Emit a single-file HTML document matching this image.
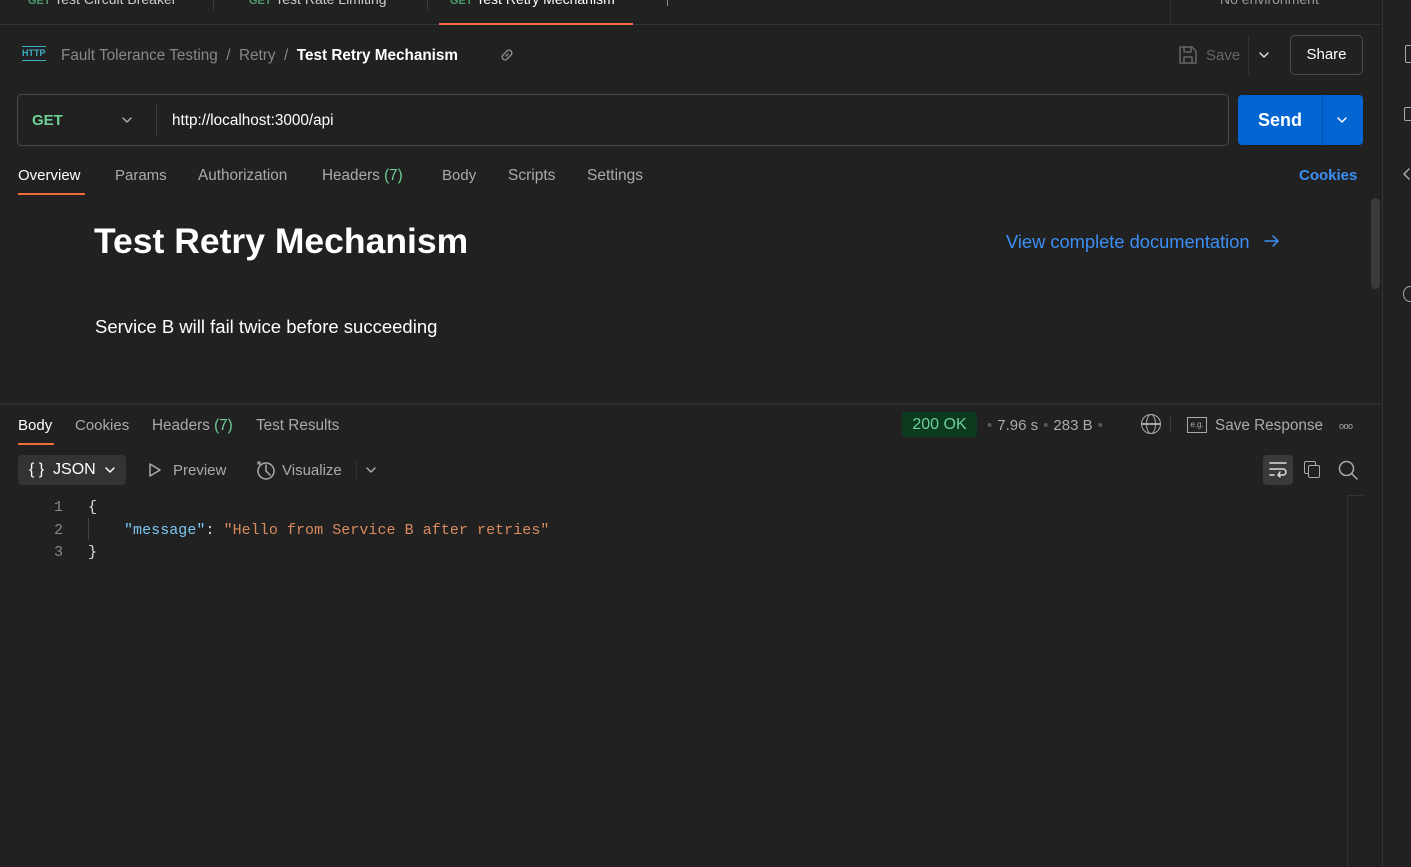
<!DOCTYPE html><html><head><style>
*{box-sizing:border-box;margin:0;padding:0}
body{width:1411px;height:867px;background:#212121;font-family:"Liberation Sans",sans-serif;color:#ccc;position:relative;overflow:hidden;font-size:15px}
.a{position:absolute;white-space:nowrap}
.g{color:#5a5a5a;margin:0 5px}
.mono{font-family:"Liberation Mono",monospace;font-size:15px}
svg.c{position:absolute;fill:none;stroke-width:1.5;stroke-linecap:round;stroke-linejoin:round}
</style></head><body>
<!-- top tabs -->
<div class="a" style="left:0;top:24px;width:1382px;height:1px;background:#333"></div>
<div class="a" style="left:28px;top:-9px;font-size:14px"><span style="color:#4c9a6a;font-size:11px;font-weight:bold">GET</span> Test Circuit Breaker</div>
<div class="a" style="left:213px;top:0;width:1px;height:10px;background:#3a3a3a"></div>
<div class="a" style="left:249px;top:-9px;font-size:14px"><span style="color:#4c9a6a;font-size:11px;font-weight:bold">GET</span> Test Rate Limiting</div>
<div class="a" style="left:427px;top:0;width:1px;height:10px;background:#3a3a3a"></div>
<div class="a" style="left:450px;top:-9px;font-size:14px;color:#fff"><span style="color:#4c9a6a;font-size:11px;font-weight:bold">GET</span> Test Retry Mechanism</div>
<div class="a" style="left:439px;top:23px;width:194px;height:2px;background:#f26b3a"></div>
<div class="a" style="left:667px;top:0;width:1px;height:6px;background:#888"></div>
<div class="a" style="left:1170px;top:0;width:1px;height:24px;background:#333"></div>
<div class="a" style="left:1220px;top:-9px;font-size:14px;color:#999">No environment</div>
<div class="a" style="left:1382px;top:0;width:1px;height:867px;background:#333"></div>
<!-- breadcrumb -->
<div class="a" style="left:22px;top:46px;color:#3fb0c8;font-size:9px;font-weight:bold;border-top:1px solid #3fb0c8;border-bottom:1px solid #3fb0c8;line-height:11px;padding:1px 0">HTTP</div>
<div class="a" style="left:61px;top:47px;color:#888;font-size:15.3px">Fault Tolerance Testing &nbsp;/&nbsp; Retry &nbsp;/&nbsp; <span style="color:#fff;font-weight:bold">Test Retry Mechanism</span></div>
<svg class="c" style="left:499px;top:47px;stroke:#888" width="16" height="16"><path d="M7 9 L9 7 M6 6 L8 4 a2.8 2.8 0 0 1 4 4 L10 10 M10 10 M6 6 L4 8 a2.8 2.8 0 0 0 4 4 L10 10"/></svg>
<svg class="c" style="left:1178px;top:45px;stroke:#666" width="20" height="20"><path d="M2 2 H14 L18 6 V18 H2 Z M6 2 V7 H13 V2 M6 18 V12 H14 V18"/></svg>
<div class="a" style="left:1206px;top:47px;color:#666">Save</div>
<div class="a" style="left:1248px;top:35px;width:1px;height:40px;background:#333"></div>
<svg class="c" style="left:1258px;top:50px;stroke:#ddd" width="12" height="10"><path d="M2 3 L6 7 L10 3"/></svg>
<div class="a" style="left:1290px;top:35px;width:73px;height:40px;border:1px solid #4a4a4a;border-radius:5px;color:#fff;text-align:center;line-height:38px">Share</div>
<!-- url bar -->
<div class="a" style="left:17px;top:94px;width:1212px;height:52px;border:1px solid #4a4a4a;border-radius:5px"></div>
<div class="a" style="left:32px;top:112px;color:#6fcf97;font-weight:bold;font-size:15px">GET</div>
<svg class="c" style="left:121px;top:115px;stroke:#aaa" width="12" height="10"><path d="M2 3 L6 7 L10 3"/></svg>
<div class="a" style="left:156px;top:104px;width:1px;height:32px;background:#3a3a3a"></div>
<div class="a" style="left:172px;top:112px;color:#fff;font-size:15.3px">http://localhost:3000/api</div>
<div class="a" style="left:1238px;top:95px;width:125px;height:50px;background:#0265d2;border-radius:4px"></div>
<div class="a" style="left:1322px;top:95px;width:1px;height:50px;background:#0252ad"></div>
<div class="a" style="left:1258px;top:110px;color:#fff;font-weight:bold;font-size:18px">Send</div>
<svg class="c" style="left:1336px;top:115px;stroke:#fff" width="12" height="10"><path d="M2 3 L6 7 L10 3"/></svg>
<!-- req tabs -->
<div class="a" style="left:18px;top:167px;color:#fff">Overview</div>
<div class="a" style="left:18px;top:193px;width:67px;height:2px;background:#f26b3a"></div>
<div class="a" style="left:115px;top:167px;color:#aaa">Params</div>
<div class="a" style="left:198px;top:167px;color:#aaa;font-size:15.3px">Authorization</div>
<div class="a" style="left:322px;top:167px;color:#aaa;font-size:15.3px">Headers <span style="color:#6fcf97">(7)</span></div>
<div class="a" style="left:442px;top:167px;color:#aaa">Body</div>
<div class="a" style="left:508px;top:167px;color:#aaa;font-size:15.5px">Scripts</div>
<div class="a" style="left:587px;top:167px;color:#aaa;font-size:15.5px">Settings</div>
<div class="a" style="left:1299px;top:167px;color:#3b8ff5;font-weight:bold">Cookies</div>
<div class="a" style="left:1371px;top:198px;width:9px;height:91px;background:#3a3a3a;border-radius:5px"></div>
<!-- overview -->
<div class="a" style="left:94px;top:221px;color:#fff;font-weight:bold;font-size:35.5px">Test Retry Mechanism</div>
<div class="a" style="left:1006px;top:231px;color:#3b8ff5;font-size:18.3px">View complete documentation</div>
<svg class="c" style="left:1263px;top:233px;stroke:#3b8ff5" width="18" height="16"><path d="M2 8 H15 M10 3 L15 8 L10 13"/></svg>
<div class="a" style="left:95px;top:316px;color:#fff;font-size:18.5px">Service B will fail twice before succeeding</div>
<div class="a" style="left:0;top:403px;width:1382px;height:2px;background:#2c2c2c"></div>
<!-- response tabs -->
<div class="a" style="left:18px;top:417px;color:#fff">Body</div>
<div class="a" style="left:18px;top:443px;width:36px;height:2px;background:#f26b3a"></div>
<div class="a" style="left:75px;top:417px;color:#aaa">Cookies</div>
<div class="a" style="left:152px;top:417px;color:#aaa;font-size:15.3px">Headers <span style="color:#6fcf97">(7)</span></div>
<div class="a" style="left:256px;top:417px;color:#aaa;font-size:15.3px">Test Results</div>
<div class="a" style="left:902px;top:412px;width:75px;height:25px;background:#0b3a1f;border-radius:3px;color:#6fcf97;text-align:center;line-height:25px;font-size:16px">200 OK</div>
<div class="a" style="left:982px;top:417px;color:#aaa"><span class="g">•</span>7.96 s<span class="g">•</span>283 B<span class="g">•</span></div>
<div class="a" style="left:1141px;top:414px;width:20px;height:20px;border:1.5px solid #aaa;border-radius:50%"></div>
<div class="a" style="left:1146px;top:414px;width:10px;height:20px;border:1.5px solid #aaa;border-radius:50%"></div>
<div class="a" style="left:1142px;top:423px;width:18px;height:1.5px;background:#aaa"></div>
<div class="a" style="left:1170px;top:416px;width:1px;height:17px;background:#3a3a3a"></div>
<div class="a" style="left:1187px;top:417px;width:20px;height:16px;border:1px solid #aaa;font-size:8px;color:#aaa;text-align:center;line-height:14px">e.g.</div>
<div class="a" style="left:1215px;top:417px;color:#aaa;font-size:15.3px">Save Response</div>
<div class="a" style="left:1339px;top:421px;color:#aaa;font-size:9px;letter-spacing:-0.5px">ooo</div>
<!-- json toolbar -->
<div class="a" style="left:18px;top:455px;width:108px;height:30px;background:#333;border-radius:4px"></div>
<div class="a" style="left:29px;top:461px;color:#fff;font-size:16px">{ }&nbsp; JSON</div>
<svg class="c" style="left:104px;top:465px;stroke:#fff" width="12" height="10"><path d="M2 3 L6 7 L10 3"/></svg>
<svg class="c" style="left:148px;top:462px;stroke:#aaa" width="14" height="16"><path d="M2 2 L12 8 L2 14 Z"/></svg>
<div class="a" style="left:173px;top:462px;color:#aaa">Preview</div>
<svg class="c" style="left:255px;top:459px;stroke:#aaa" width="22" height="22"><circle cx="11" cy="12" r="8"/><path d="M11 6 L11 12 L15 16 M3 3 L5 5 M5 3 L3 5"/></svg>
<div class="a" style="left:282px;top:462px;color:#aaa">Visualize</div>
<div class="a" style="left:356px;top:460px;width:1px;height:20px;background:#333"></div>
<svg class="c" style="left:365px;top:465px;stroke:#aaa" width="12" height="10"><path d="M2 3 L6 7 L10 3"/></svg>
<div class="a" style="left:1263px;top:455px;width:30px;height:30px;background:#3a3a3a;border-radius:4px"></div>
<svg class="c" style="left:1268px;top:460px;stroke:#ddd" width="20" height="20"><path d="M2 3 H18 M2 9 H15 a3 3 0 0 1 0 6 H10 M12 12 L10 15 L12 17 M2 15 H6"/></svg>
<div class="a" style="left:1304px;top:461px;width:12px;height:13px;border:1.5px solid #aaa;border-radius:2px"></div>
<div class="a" style="left:1308px;top:465px;width:12px;height:13px;border:1.5px solid #aaa;border-radius:2px;background:#212121"></div>
<svg class="c" style="left:1337px;top:459px;stroke:#aaa" width="22" height="22"><circle cx="9.5" cy="9.5" r="7"/><path d="M14.5 14.5 L20 20"/></svg>
<div class="a" style="left:1347px;top:495px;width:1px;height:372px;background:#333"></div>
<div class="a" style="left:1347px;top:495px;width:16px;height:1px;background:#333"></div>
<!-- code -->
<div class="a mono" style="left:54px;top:497px;color:#888;line-height:22.5px">1<br>2<br>3</div>
<div class="a mono" style="left:88px;top:497px;color:#ddd;line-height:22.5px;letter-spacing:0.05px">{<br><span style="display:inline-block;width:36px"></span><span style="color:#7cc7f2">"message"</span>: <span style="color:#d98a5f">"Hello from Service B after retries"</span><br>}</div>
<div class="a" style="left:88px;top:518px;width:1px;height:22px;background:#444"></div>
<!-- right sidebar icons -->
<div class="a" style="left:1405px;top:45px;width:10px;height:18px;border:1.5px solid #aaa;border-radius:2px"></div>
<div class="a" style="left:1404px;top:107px;width:10px;height:14px;border:1.5px solid #aaa;border-radius:2px"></div>
<svg class="c" style="left:1401px;top:166px;stroke:#aaa" width="10" height="16"><path d="M8 3 L3 8 L8 13"/></svg>
<div class="a" style="left:1403px;top:286px;width:14px;height:16px;border:1.5px solid #aaa;border-radius:50%"></div>
</body></html>
